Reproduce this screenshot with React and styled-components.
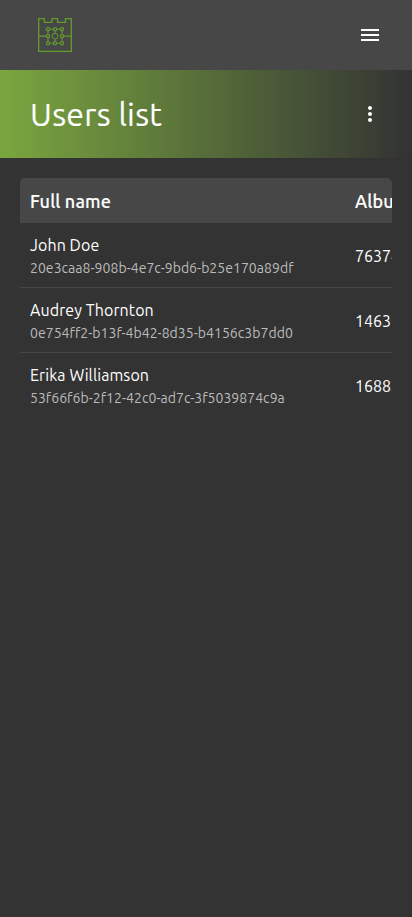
import React from 'react';
import styled, { createGlobalStyle } from 'styled-components';

const GlobalStyle = createGlobalStyle`
  * { box-sizing: border-box; }
  body {
    margin: 0;
    background: #333;
    color: #fff;
    font-family: Ubuntu, "Noto Sans", sans-serif;
  }
`;

const Page = styled.div`
  display: flex;
  flex-direction: column;
  min-height: 100vh;
  background: #333;
`;

const TopBar = styled.header`
  display: flex;
  align-items: center;
  justify-content: space-between;
  height: 70px;
  padding: 0 30px 0 38px;
  background: #474747;
`;

const IconButton = styled.button`
  display: flex;
  padding: 0;
  border: 0;
  background: none;
  color: #fff;
`;

const TitleBar = styled.div`
  display: flex;
  align-items: center;
  justify-content: space-between;
  height: 88px;
  padding: 0 30px;
  background: linear-gradient(90deg, #7aa63f, #333);
`;

const Title = styled.h1`
  margin: 0;
  font-size: 32px;
  font-weight: 400;
  line-height: 40px;
  letter-spacing: 0.28px;
  -webkit-text-stroke: 0.15px currentColor;
`;

const TableScroll = styled.main`
  margin: 20px;
  overflow: hidden;
  border-radius: 5px 5px 0 0;
`;

const Table = styled.div`
  width: 520px;
`;

const Row = styled.div`
  display: grid;
  grid-template-columns: 325px 1fr;
  align-items: center;
  height: 65px;
  padding-top: 2px;
  border-bottom: 1px solid #474747;

  &:last-child { border-bottom-color: transparent; }
`;

const HeadRow = styled(Row)`
  height: 45px;
  background: #474747;
`;

const Cell = styled.div`
  padding: 0 10px;
  font-size: 16px;
  line-height: 22px;
  white-space: nowrap;
`;

const HeadCell = styled(Cell)`
  font-size: 18px;
  font-weight: 500;
  letter-spacing: 0.15px;
  -webkit-text-stroke: 0.15px currentColor;
`;

const Name = styled.div`
  line-height: 24px;
  letter-spacing: 0.09px;
`;

const UserId = styled.div`
  color: #bbb;
  font-size: 14px;
  line-height: 22px;
  letter-spacing: 0.04px;
`;

const users = [
  { name: 'John Doe', id: '20e3caa8-908b-4e7c-9bd6-b25e170a89df', album: '76374' },
  { name: 'Audrey Thornton', id: '0e754ff2-b13f-4b42-8d35-b4156c3b7dd0', album: '14631' },
  { name: 'Erika Williamson', id: '53f66f6b-2f12-42c0-ad7c-3f5039874c9a', album: '16882' },
];

const nodes = [[10, 11.2], [17, 11.2], [24, 11.2], [10, 18.2], [24, 18.2], [10, 25.2], [17, 25.2], [24, 25.2]];

function Logo() {
  return (
    <svg width="34" height="34" viewBox="0 0 34 34" fill="none" stroke="#659a2c">
      <path d="M.7 33.3V.7H6.3V4.3H14V.7H19.5V4.3H27.5V.7H33.3V33.3zM.7 18.2H8.4M25.6 18.2H33.3" strokeWidth="1.3" />
      <path d="M11.6 11.2h3.8M18.6 11.2h3.8M11.6 25.2h3.8M18.6 25.2h3.8M10 12.8v3.8M10 19.8v3.8M24 12.8v3.8M24 19.8v3.8M17 12.8V15.2M17 21.2v2.4" strokeWidth="1" />
      <circle cx="17" cy="18.2" r="2.9" />
      {nodes.map(([x, y]) => <circle key={`${x}-${y}`} cx={x} cy={y} r="1.6" strokeWidth="1.2" />)}
    </svg>
  );
}

export default function App() {
  return (
    <Page>
      <GlobalStyle />
      <TopBar>
        <Logo />
        <IconButton aria-label="Menu">
          <svg width="24" height="24" viewBox="0 0 24 24" fill="currentColor"><path d="M3 18h18v-2H3v2zm0-5h18v-2H3v2zm0-7v2h18V6H3z" /></svg>
        </IconButton>
      </TopBar>
      <TitleBar>
        <Title>Users list</Title>
        <IconButton aria-label="More">
          <svg width="24" height="24" viewBox="0 0 24 24" fill="currentColor"><path d="M12 8c1.1 0 2-.9 2-2s-.9-2-2-2-2 .9-2 2 .9 2 2 2zm0 2c-1.1 0-2 .9-2 2s.9 2 2 2 2-.9 2-2-.9-2-2-2zm0 6c-1.1 0-2 .9-2 2s.9 2 2 2 2-.9 2-2-.9-2-2-2z" /></svg>
        </IconButton>
      </TitleBar>
      <TableScroll>
        <Table>
          <HeadRow>
            <HeadCell>Full name</HeadCell>
            <HeadCell>Album number</HeadCell>
          </HeadRow>
          {users.map((u) => (
            <Row key={u.id}>
              <Cell>
                <Name>{u.name}</Name>
                <UserId>{u.id}</UserId>
              </Cell>
              <Cell>{u.album}</Cell>
            </Row>
          ))}
        </Table>
      </TableScroll>
    </Page>
  );
}
